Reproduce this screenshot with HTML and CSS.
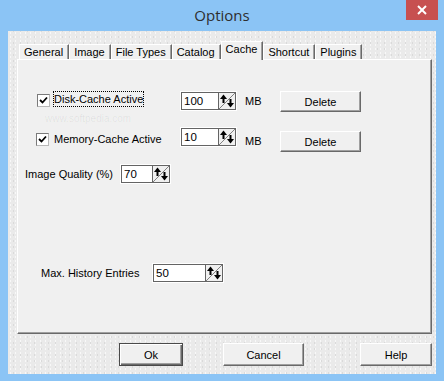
FILE: index.html
```html
<!DOCTYPE html>
<html lang="en">
<head>
    <meta charset="UTF-8">
    <title>Options</title>
    <link rel="stylesheet" href="styles.css">
</head>
<body>
    <div class="window">
        <div class="titlebar">
            <div class="title">Options</div>
            <div class="close">
                <svg width="10" height="10" viewBox="0 0 10 10">
                    <line x1="1" y1="1" x2="9" y2="9" stroke="#fff" stroke-width="2"></line>
                    <line x1="9" y1="1" x2="1" y2="9" stroke="#fff" stroke-width="2"></line>
                </svg>
            </div>
        </div>

        <div class="client">
            <div class="tabs">
                <div class="tab">General</div>
                <div class="tab">Image</div>
                <div class="tab">File Types</div>
                <div class="tab">Catalog</div>
                <div class="tab active">Cache</div>
                <div class="tab">Shortcut</div>
                <div class="tab">Plugins</div>
            </div>

            <div class="panel">
                <div class="watermark">www.softpedia.com</div>

                <!-- disk cache -->
                <div class="row row-disk">
                    <div class="check check-disk">
                        <span class="box">
                            <svg width="11" height="11" viewBox="0 0 11 11"><polyline points="2,5 4.5,7.5 9,2.5" fill="none" stroke="#000" stroke-width="1.8"></polyline></svg>
                        </span>
                        <span class="check-label focused">Disk-Cache Active</span>
                    </div>
                    <div class="spin w57">
                        <div class="spin-value">100</div>
                        <div class="spin-btn">
                            <svg width="16" height="16" viewBox="0 0 16 16">
                                <line x1="0" y1="16" x2="16" y2="0" stroke="#808080"></line>
                                <polygon points="1,6 4.5,1.5 8,6" fill="#000"></polygon>
                                <rect x="3.5" y="5" width="2" height="5" fill="#000"></rect>
                                <polygon points="8,10 11.5,14.5 15,10" fill="#000"></polygon>
                                <rect x="10.5" y="6" width="2" height="5" fill="#000"></rect>
                            </svg>
                        </div>
                    </div>
                    <div class="unit">MB</div>
                    <button class="btn btn-delete">Delete</button>
                </div>

                <!-- memory cache -->
                <div class="row row-mem">
                    <div class="check check-mem">
                        <span class="box">
                            <svg width="11" height="11" viewBox="0 0 11 11"><polyline points="2,5 4.5,7.5 9,2.5" fill="none" stroke="#000" stroke-width="1.8"></polyline></svg>
                        </span>
                        <span class="check-label">Memory-Cache Active</span>
                    </div>
                    <div class="spin w57">
                        <div class="spin-value">10</div>
                        <div class="spin-btn">
                            <svg width="16" height="16" viewBox="0 0 16 16">
                                <line x1="0" y1="16" x2="16" y2="0" stroke="#808080"></line>
                                <polygon points="1,6 4.5,1.5 8,6" fill="#000"></polygon>
                                <rect x="3.5" y="5" width="2" height="5" fill="#000"></rect>
                                <polygon points="8,10 11.5,14.5 15,10" fill="#000"></polygon>
                                <rect x="10.5" y="6" width="2" height="5" fill="#000"></rect>
                            </svg>
                        </div>
                    </div>
                    <div class="unit">MB</div>
                    <button class="btn btn-delete">Delete</button>
                </div>

                <!-- image quality -->
                <div class="row row-quality">
                    <div class="field-label quality-label">Image Quality (%)</div>
                    <div class="spin w51">
                        <div class="spin-value">70</div>
                        <div class="spin-btn">
                            <svg width="16" height="16" viewBox="0 0 16 16">
                                <line x1="0" y1="16" x2="16" y2="0" stroke="#808080"></line>
                                <polygon points="1,6 4.5,1.5 8,6" fill="#000"></polygon>
                                <rect x="3.5" y="5" width="2" height="5" fill="#000"></rect>
                                <polygon points="8,10 11.5,14.5 15,10" fill="#000"></polygon>
                                <rect x="10.5" y="6" width="2" height="5" fill="#000"></rect>
                            </svg>
                        </div>
                    </div>
                </div>

                <!-- history -->
                <div class="row row-history">
                    <div class="field-label history-label">Max. History Entries</div>
                    <div class="spin w72">
                        <div class="spin-value">50</div>
                        <div class="spin-btn">
                            <svg width="16" height="16" viewBox="0 0 16 16">
                                <line x1="0" y1="16" x2="16" y2="0" stroke="#808080"></line>
                                <polygon points="1,6 4.5,1.5 8,6" fill="#000"></polygon>
                                <rect x="3.5" y="5" width="2" height="5" fill="#000"></rect>
                                <polygon points="8,10 11.5,14.5 15,10" fill="#000"></polygon>
                                <rect x="10.5" y="6" width="2" height="5" fill="#000"></rect>
                            </svg>
                        </div>
                    </div>
                </div>
            </div>

            <div class="buttons">
                <button class="btn btn-default btn-ok">Ok</button>
                <button class="btn btn-cancel">Cancel</button>
                <button class="btn btn-help">Help</button>
            </div>
        </div>
    </div>
</body>
</html>
```

FILE: styles.css
```css
:root {
    --frame: #8bc4f5;
    --face: #f0f0f0;
    --shadow: #a0a0a0;
    --dark: #696969;
}

* {
    box-sizing: border-box;
}

body {
    margin: 0;
    font-family: 'Liberation Sans', Arial, sans-serif;
    font-size: 11px;
    color: #000;
}

.window {
    width: 444px;
    height: 381px;
    background-color: var(--frame);
    padding: 0 8px 7px;
    display: flex;
    flex-direction: column;
}

.titlebar {
    height: 31px;
    display: grid;
    grid-template-columns: 1fr auto 1fr;
    align-items: start;
}

.title {
    grid-column: 2;
    font-family: 'Open Sans', 'Noto Sans', sans-serif;
    font-size: 15px;
    color: #2e2e2e;
    line-height: 30px;
}

.close {
    grid-column: 3;
    justify-self: end;
    margin-right: -2px;
    width: 32px;
    height: 20px;
    background-color: #c75050;
    display: flex;
    justify-content: center;
    align-items: center;
}

.client {
    flex: 1;
    padding: 10px 4px 8px 9px;
    display: flex;
    flex-direction: column;
    background-color: #eaeaea;
    background-image:
        radial-gradient(#f8f8f8 1px, transparent 1px),
        radial-gradient(#dadada 1px, transparent 1px);
    background-size: 5px 4px, 7px 6px;
    background-position: 0 0, 2px 3px;
}

/* tabs */
.tabs {
    display: flex;
    align-items: flex-end;
    height: 18px;
    padding-left: 2px;
}

.tab {
    height: 15px;
    padding: 0 5px 0 4px;
    line-height: 14px;
    background-color: var(--face);
    border-top: 1px solid #fff;
    border-left: 1px solid #fff;
    border-right: 1px solid var(--dark);
    box-shadow: inset -1px 0 var(--shadow);
    white-space: nowrap;
}

.tab.active {
    height: 19px;
    margin-bottom: -1px;
    line-height: 15px;
    position: relative;
    z-index: 1;
}

.panel {
    height: 275px;
    position: relative;
    background-color: var(--face);
    border-top: 1px solid #fff;
    border-left: 1px solid #fff;
    border-right: 1px solid var(--dark);
    border-bottom: 1px solid var(--dark);
    box-shadow: inset -1px -1px var(--shadow);
}

.watermark {
    position: absolute;
    left: 27px;
    top: 53px;
    font-size: 10px;
    color: rgba(0, 0, 0, 0.07);
    pointer-events: none;
}

.row {
    display: flex;
    align-items: flex-start;
    position: relative;
}

.row-disk {
    margin-top: 31px;
}

.row-mem {
    margin-top: 15px;
}

.row-quality {
    margin-top: 12px;
}

.row-history {
    margin-top: 79px;
}

/* checkboxes */
.check {
    display: flex;
    align-items: flex-start;
}

.check-disk {
    margin-left: 19px;
    width: 143px;
}

.check-mem {
    margin-left: 18px;
    width: 144px;
}

.box {
    width: 13px;
    height: 13px;
    background-color: #fff;
    border: 1px solid;
    border-color: #7a7a7a #b8b8b8 #b8b8b8 #7a7a7a;
    display: flex;
    justify-content: center;
    align-items: center;
}

.check-disk .box {
    margin-top: 3px;
}

.check-mem .box {
    margin-top: 6px;
}

.check-label {
    margin-left: 3px;
    height: 16px;
    line-height: 14px;
    border: 1px dotted transparent;
    white-space: nowrap;
}

.check-label.focused {
    border-color: #000;
}

.check-mem .check-label {
    margin-left: 4px;
    margin-top: 4px;
}

/* spin edits */
.spin {
    height: 20px;
    display: flex;
    background-color: #fff;
    border: 1px solid #fff;
}

.w57 {
    width: 57px;
}

.w51 {
    width: 51px;
}

.w72 {
    width: 72px;
}

.spin-value {
    flex: 1;
    border: 1px solid #646464;
    border-right: none;
    padding-left: 2px;
    line-height: 16px;
    font-size: 11.5px;
}

.spin-btn {
    width: 18px;
    height: 18px;
    background-color: var(--face);
    border: 1px solid #646464;
    display: flex;
}

.unit {
    margin-left: 8px;
    width: 35px;
    line-height: 21px;
}

.row-mem .unit,
.row-mem .btn-delete {
    margin-top: 4px;
}

.field-label {
    line-height: 20px;
    white-space: nowrap;
}

.quality-label {
    margin-left: 7px;
    width: 95px;
}

.history-label {
    margin-left: 23px;
    width: 111px;
}

/* buttons */
.btn {
    font-family: 'Liberation Sans', Arial, sans-serif;
    font-size: 11px;
    color: #000;
    background-color: var(--face);
    border: 1px solid;
    border-color: #fff var(--dark) var(--dark) #fff;
    box-shadow: inset -1px -1px var(--shadow);
    padding: 0;
}

.btn-delete {
    width: 81px;
    height: 21px;
}

.buttons {
    display: flex;
    margin-top: 9px;
    padding-left: 102px;
}

.buttons .btn {
    height: 23px;
}

.btn-default {
    border: 1px solid #4a4a4a;
    box-shadow: inset 1px 1px #fff, inset -1px -1px var(--dark), inset -2px -2px var(--shadow);
}

.btn-ok {
    width: 64px;
}

.btn-cancel {
    width: 81px;
    margin-left: 40px;
}

.btn-help {
    width: 72px;
    margin-left: 56px;
}
```
